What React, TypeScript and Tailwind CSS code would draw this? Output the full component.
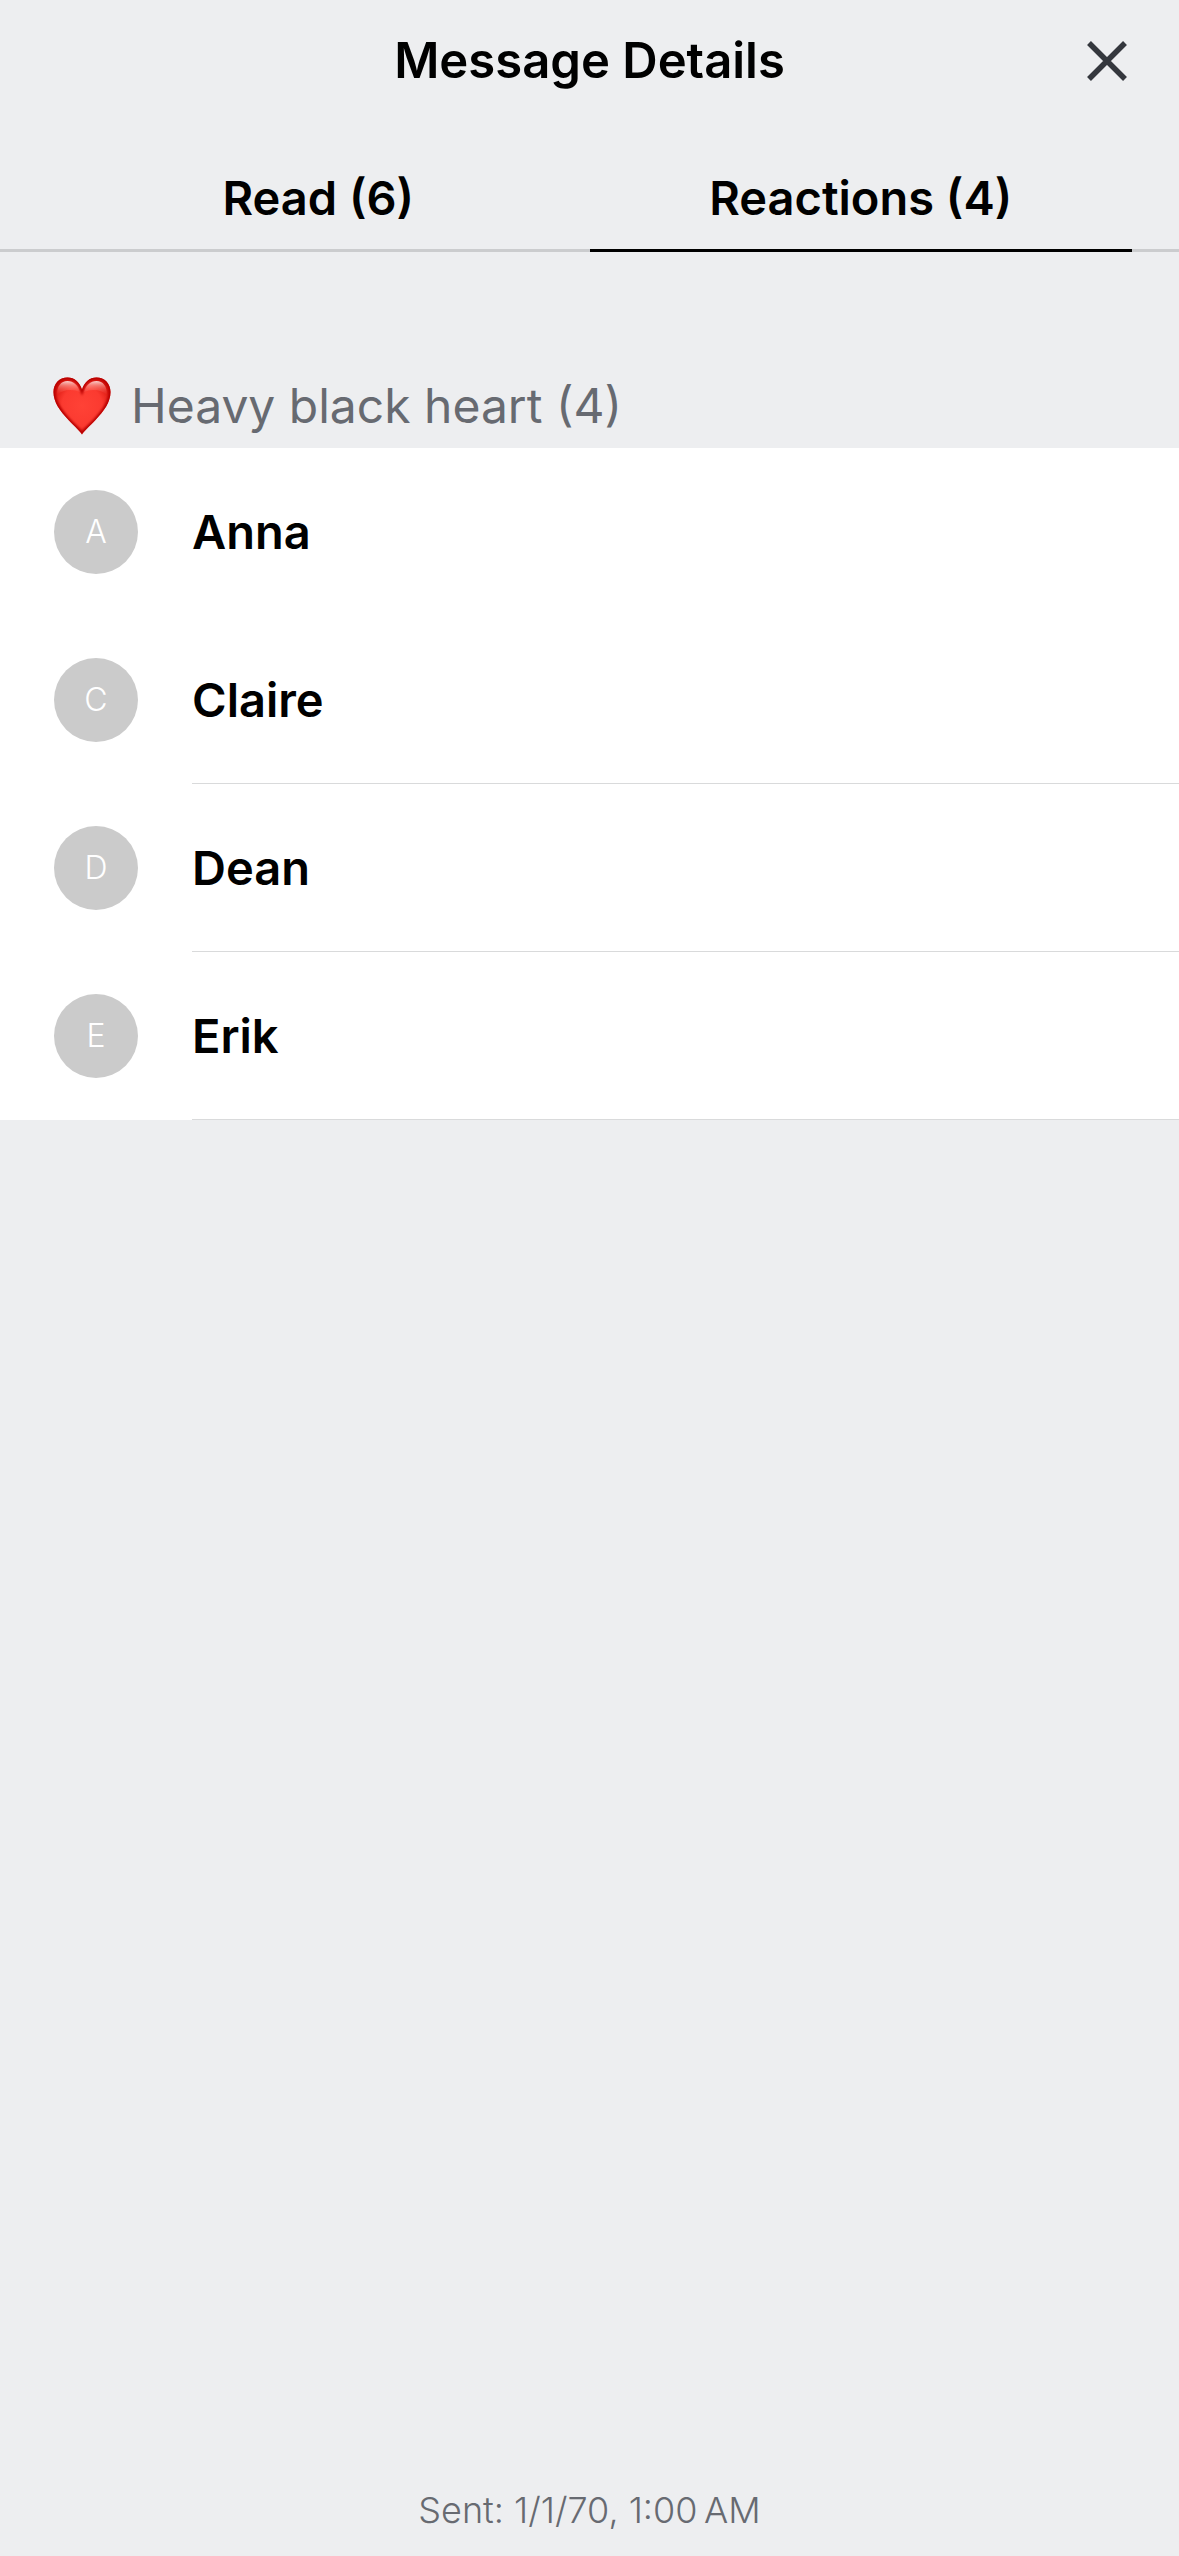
import React from "react";

const people = ["Anna", "Claire", "Dean", "Erik"];

function CloseIcon() {
  return (
    <svg viewBox="0 0 40 40" className="size-10" fill="none" stroke="#34373d" strokeWidth="5.500" aria-hidden="true">
      <path d="M2 2 38 38M38 2 2 38" />
    </svg>
  );
}

function HeartIcon() {
  const shape =
    "M29 57.500C27.500 54.500 22 50 15.500 43C7 34 .5 25 .5 15C.5 6.500 6.500 .5 14.500 .5C21.500 .5 26.500 5 29 12.500C31.500 5 36.500 .5 43.500 .5C51.500 .5 57.500 6.500 57.500 15C57.500 25 51 34 42.500 43C36 50 30.500 54.500 29 57.500Z";
  return (
    <svg viewBox="0 0 58 58" className="size-[58px] shrink-0" aria-hidden="true">
      <defs>
        <radialGradient id="heart-body" cx="29" cy="29" r="31" gradientUnits="userSpaceOnUse">
          <stop offset="0" stopColor="#ff4236" />
          <stop offset=".65" stopColor="#fb3a30" />
          <stop offset="1" stopColor="#d8150e" />
        </radialGradient>
        <linearGradient id="heart-shine" x1="0" y1="3" x2="0" y2="18" gradientUnits="userSpaceOnUse">
          <stop offset="0" stopColor="#fff" stopOpacity=".9" />
          <stop offset=".35" stopColor="#ffc0b8" stopOpacity=".55" />
          <stop offset="1" stopColor="#ff5a4d" stopOpacity="0" />
        </linearGradient>
        <filter id="heart-soft" x="-20%" y="-20%" width="140%" height="140%">
          <feGaussianBlur stdDeviation="1.300" />
        </filter>
        <clipPath id="heart-clip">
          <path d={shape} />
        </clipPath>
      </defs>
      <path d={shape} fill="url(#heart-body)" />
      <g clipPath="url(#heart-clip)">
        <path d={shape} fill="none" stroke="#b80500" strokeWidth="4" filter="url(#heart-soft)" />
        <path
          d="M4 18C4 9 8 4 14.500 4C20.500 4 25 8 27 15C20 12 10 12 4 18ZM54 18C54 9 50 4 43.500 4C37.500 4 33 8 31 15C38 12 48 12 54 18Z"
          fill="url(#heart-shine)"
        />
      </g>
    </svg>
  );
}

function Person({ name, divided }: { name: string; divided: boolean }) {
  return (
    <li className="flex h-[168px] items-stretch pl-[54px]">
      <span
        aria-hidden="true"
        className="flex size-[84px] shrink-0 items-center justify-center self-center rounded-full bg-[#cbcbcb] text-[32px] font-light text-white"
      >
        {name[0]}
      </span>
      <span
        className={
          "ml-[54px] flex flex-1 items-center border-b pt-0.5 text-[47px] font-semibold " +
          (divided ? "border-[#d9dadb]" : "border-transparent")
        }
      >
        {name}
      </span>
    </li>
  );
}

export default function App() {
  return (
    <div className="flex min-h-screen flex-col bg-[#edeef0] font-['Inter',sans-serif] text-black">
      <header className="grid h-[122px] grid-cols-[1fr_auto_1fr] items-center px-[52px]">
        <h1 className="col-start-2 text-[49px] font-semibold">Message Details</h1>
        <button type="button" aria-label="Close" className="justify-self-end">
          <CloseIcon />
        </button>
      </header>

      <div role="tablist" className="flex h-[130px] border-b-[3px] border-[#cbccce] px-[47px] text-[47px] font-semibold">
        <button
          type="button"
          role="tab"
          aria-selected="false"
          className="-mb-[3px] flex-1 border-b-[3px] border-transparent pt-[30px] pb-1"
        >
          Read (6)
        </button>
        <button
          type="button"
          role="tab"
          aria-selected="true"
          className="-mb-[3px] flex-1 border-b-[3px] border-black pt-[30px] pb-1"
        >
          Reactions (4)
        </button>
      </div>

      <main className="flex-1">
        <h2 className="flex h-[196px] items-end gap-5 pb-[13px] pl-[53px] text-[48px] leading-[58px] font-normal text-[#676a71]">
          <HeartIcon />
          Heavy black heart (4)
        </h2>
        <ul className="bg-white">
          {people.map((name, i) => (
            <Person key={name} name={name} divided={i > 0} />
          ))}
        </ul>
      </main>

      <footer className="pb-[24px] text-center text-[36px] leading-[44px] font-light text-[#676a71]">
        Sent: 1/1/70, 1:00{"\u202f"}AM
      </footer>
    </div>
  );
}
